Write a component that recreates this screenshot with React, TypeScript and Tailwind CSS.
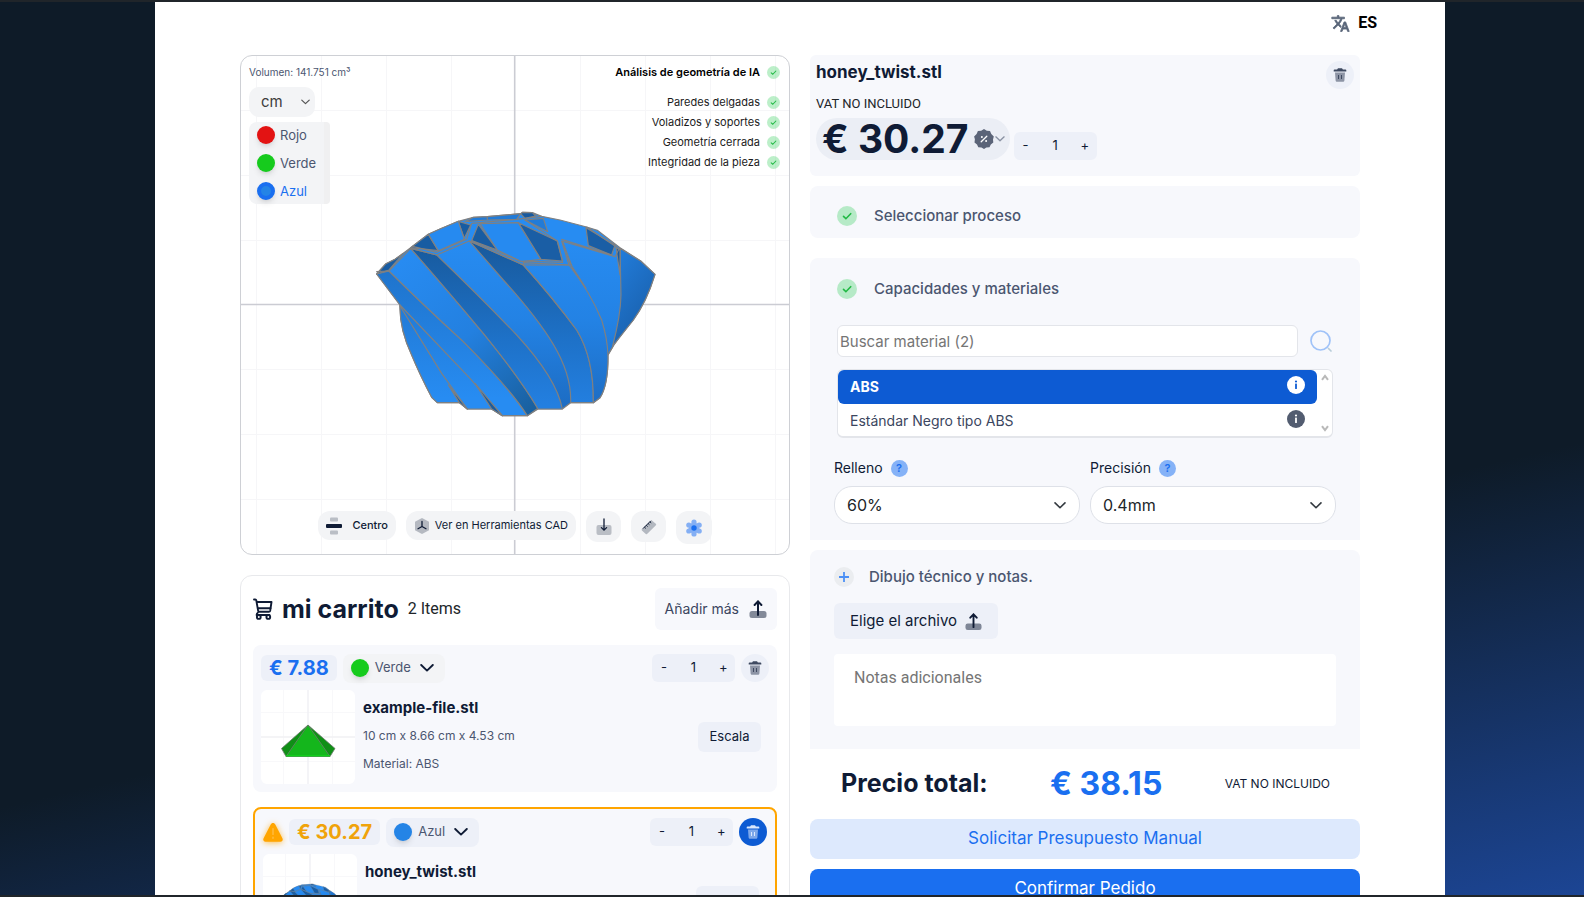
import React, { useState } from "react";

type IconProps = { className?: string };

/* ---------- icons ---------- */

function CheckBadge({ className = "" }: IconProps) {
  return (
    <svg viewBox="0 0 20 20" className={className} aria-hidden="true">
      <circle cx="10" cy="10" r="10" fill="#22c94b" opacity="0.3" />
      <path d="M6.5 10.4l2.4 2.3 4.8-5" fill="none" stroke="#22b945" strokeWidth="1.6" strokeLinecap="round" />
    </svg>
  );
}

function TrashIcon({ className = "" }: IconProps) {
  return (
    <svg viewBox="0 0 14 14" className={className} fill="currentColor" aria-hidden="true">
      <path d="M5 0.3h4l0.9 1.100h2.600c0.500 0 0.800 0.400 0.800 0.900v1.300H0.700V2.300c0-0.500 0.300-0.900 0.800-0.900h2.600z" />
      <path
        opacity="0.55"
        d="M2 4.400h10l-0.600 8c-0.100 0.800-0.700 1.400-1.500 1.400H4.100c-0.800 0-1.400-0.600-1.500-1.400z"
      />
      <path d="M5 7h1v4H5zM8 7h1v4H8z" />
    </svg>
  );
}

function UploadIcon({ className = "" }: IconProps) {
  return (
    <svg viewBox="0 0 18 18" className={className} aria-hidden="true">
      <rect x="0.5" y="11" width="17" height="7" rx="2.500" fill="#0f1b35" opacity="0.5" />
      <path d="M9 15V2.200M5.600 5L9 1.400 12.400 5" fill="none" stroke="#0f1b35" strokeWidth="2" strokeLinecap="round" />
    </svg>
  );
}

function ImportIcon() {
  return (
    <svg viewBox="0 0 16 18" className="h-[18px] w-4" aria-hidden="true">
      <rect x="0.5" y="7" width="15" height="10" rx="2" fill="#0f1b35" opacity="0.25" />
      <path d="M8 1v11M5.400 9.600L8 12.200l2.600-2.600" fill="none" stroke="#0f1b35" strokeWidth="1.300" strokeLinecap="round" />
    </svg>
  );
}

function RulerIcon() {
  return (
    <svg viewBox="0 0 16 16" className="size-4" aria-hidden="true">
      <path d="M10.600 1.200l4.200 3.600c.5.400.5 1 .1 1.500L6.300 14.800c-.4.500-1 .500-1.500.1L.9 11.400c-.4-.4-.4-1 0-1.500z" fill="#0f1b35" opacity="0.28" />
      <path d="M2 9.600L9.800 1.800M3.500 8.200l1.300 1.200M5.300 6.300l1.300 1.200M7.100 4.500l1.300 1.200M8.900 2.700l1.300 1.200" stroke="#0f1b35" strokeWidth="1" fill="none" />
    </svg>
  );
}

function FlowerIcon() {
  return (
    <svg viewBox="0 0 18 18" className="size-[18px]" aria-hidden="true">
      <g fill="#84aff4">
        <circle cx="9" cy="9" r="5.500" />
        <circle cx="9" cy="3" r="2.600" />
        <circle cx="9" cy="15" r="2.600" />
        <circle cx="3.800" cy="6" r="2.600" />
        <circle cx="14.200" cy="6" r="2.600" />
        <circle cx="3.800" cy="12" r="2.600" />
        <circle cx="14.200" cy="12" r="2.600" />
      </g>
      <circle cx="9" cy="9" r="2.700" fill="#1a6ff0" />
    </svg>
  );
}

function AlignIcon() {
  return (
    <svg viewBox="0 0 16 18" className="h-[18px] w-4" aria-hidden="true">
      <rect x="4" y="0.500" width="8" height="4" rx="1" fill="#0f1b35" opacity="0.25" />
      <rect x="4" y="13.500" width="8" height="4" rx="1" fill="#0f1b35" opacity="0.25" />
      <rect x="0" y="7" width="16" height="4" rx="1" fill="#0f1b35" />
    </svg>
  );
}

function CubeIcon() {
  return (
    <svg viewBox="0 0 16 16" className="size-4" aria-hidden="true">
      <path d="M8 0l7 3.800v8.400L8 16l-7-3.800V3.800z" fill="#0f1b35" opacity="0.27" />
      <path d="M8 3.500V8.500M8 8.500l-4 2.300M8 8.500l4 2.300" stroke="#0f1b35" strokeWidth="1.300" strokeLinecap="round" />
    </svg>
  );
}

function Chevron({ className = "" }: IconProps) {
  return (
    <svg viewBox="0 0 14 8" className={className} aria-hidden="true">
      <path d="M1.200 1L7 6.600 12.800 1" fill="none" stroke="currentColor" strokeWidth="1.900" strokeLinecap="round" strokeLinejoin="round" />
    </svg>
  );
}

function ScrollArrow({ className = "" }: IconProps) {
  return (
    <svg viewBox="0 0 8 7" className={className} aria-hidden="true">
      <path d="M1 1.200L4 5.200 7 1.200" fill="none" stroke="currentColor" strokeWidth="2" />
    </svg>
  );
}

function CartIcon() {
  return (
    <svg viewBox="0 0 20 22" className="h-[22px] w-5" fill="none" stroke="#0f1b35" strokeWidth="1.900" strokeLinecap="round" strokeLinejoin="round" aria-hidden="true">
      <path d="M1 1.500h1.200c.6 0 1 .3 1.100.9l1.800 10.200c.1.700.5 1.100 1.200 1.100h9.500c.8 0 1.200-.3 1.400-1L18.500 4H4" />
      <path d="M5 10.300h12.500M5 14.500c-1 .6-1.400 1.300-1.400 2.500h12.900" />
      <circle cx="5.800" cy="19" r="1.900" />
      <circle cx="15.300" cy="19" r="1.900" />
    </svg>
  );
}

function TranslateIcon() {
  return (
    <svg viewBox="0 0 24 24" className="size-[19px]" fill="#596579" aria-hidden="true">
      <path d="M12.870 15.070l-2.540-2.510.03-.03c1.740-1.940 2.980-4.170 3.710-6.530H17V4h-7V2H8v2H1v1.990h11.170C11.500 7.920 10.440 9.750 9 11.350 8.070 10.320 7.300 9.190 6.690 8h-2c.73 1.630 1.730 3.170 2.980 4.560l-5.090 5.020L4 19l5-5 3.110 3.110.76-2.040zM18.500 10h-2L12 22h2l1.120-3h4.750L21 22h2l-4.500-12zm-2.620 7l1.620-4.330L19.120 17h-3.240z" stroke="#596579" strokeWidth="1" />
    </svg>
  );
}

function DiscountIcon() {
  return (
    <svg viewBox="0 0 20 20" className="size-5" aria-hidden="true">
      <path
        d="M10 0l2.800 1.700 3.200.2 1.300 3L19.800 7.500 19 10.500l.3 3-2.500 1.900-1.300 2.900-3.200.1L10 20l-2.500-1.600-3.200-.1L3 15.400.5 13.500.9 10.300.1 7.500 2.600 5l1.300-3 3.300-.3z"
        fill="#5b6478"
      />
      <path d="M7.200 12.800l5.600-5.600" stroke="#fff" strokeWidth="1.300" strokeLinecap="round" />
      <circle cx="7.900" cy="7.900" r="1" fill="#fff" />
      <circle cx="12.100" cy="12.100" r="1" fill="#fff" />
    </svg>
  );
}

function InfoIcon({ disc, mark }: { disc: string; mark: string }) {
  return (
    <svg viewBox="0 0 18 18" className="size-[18px]" aria-hidden="true">
      <circle cx="9" cy="9" r="9" fill={disc} />
      <circle cx="9" cy="5.500" r="1.100" fill={mark} />
      <rect x="8.100" y="7.500" width="1.800" height="5.500" rx="0.500" fill={mark} />
    </svg>
  );
}

function WarningIcon() {
  return (
    <svg viewBox="0 0 20 19" className="h-[19px] w-5 drop-shadow-[0_1px_3px_rgba(255,165,0,0.7)]" aria-hidden="true">
      <path d="M10 0c1 0 1.700.5 2.300 1.500l7.100 13.700c.9 1.700 0 3.500-1.900 3.500h-15c-1.900 0-2.800-1.800-1.900-3.500L7.700 1.500C8.300.5 9 0 10 0z" fill="#ffa500" />
      <path d="M10 5.500v6M10 14v1.300" stroke="#ffc04d" strokeWidth="1.200" strokeLinecap="round" />
    </svg>
  );
}

/* ---------- 3D previews ---------- */

function TwistModel() {
  return (
    <g stroke="#808080" strokeWidth="3.500" strokeLinejoin="round" strokeLinecap="round">
      <defs>
        <linearGradient id="tw-light" x1="0" y1="100" x2="0" y2="600" gradientUnits="userSpaceOnUse">
          <stop offset="0" stopColor="#278cf2" />
          <stop offset="0.500" stopColor="#2382e4" />
          <stop offset="1" stopColor="#1d6dc4" />
        </linearGradient>
        <linearGradient id="tw-dark" x1="0" y1="130" x2="0" y2="600" gradientUnits="userSpaceOnUse">
          <stop offset="0" stopColor="#185b9f" />
          <stop offset="0.600" stopColor="#1e72c9" />
          <stop offset="1" stopColor="#237fe0" />
        </linearGradient>
        <linearGradient id="tw-rise" x1="0" y1="200" x2="0" y2="580" gradientUnits="userSpaceOnUse">
          <stop offset="0" stopColor="#1f74cc" />
          <stop offset="1" stopColor="#278cf2" />
        </linearGradient>
        <linearGradient id="tw-valley" x1="120" y1="150" x2="480" y2="620" gradientUnits="userSpaceOnUse">
          <stop offset="0" stopColor="#278bf1" />
          <stop offset="0.500" stopColor="#2380e0" />
          <stop offset="1" stopColor="#19609f" />
        </linearGradient>
        <linearGradient id="tw-side" x1="700" y1="200" x2="830" y2="300" gradientUnits="userSpaceOnUse">
          <stop offset="0" stopColor="#227cda" />
          <stop offset="1" stopColor="#1b66b6" />
        </linearGradient>
      </defs>
      <path
        fill="url(#tw-light)"
        d="M20 207L48 176 75 163 100 145 122 128 175 88 210 72 265 49 310 37 352 35 452 26 458 22 487 23 515 34 570 45 650 66 682 76 750 128 812 168 855 208Q830 290 790 345 750 395 732 420L714 450Q715 540 690 578L670 593H602L577 612H504L472 632H397L365 612H292L268 593H202L185 577Q150 510 125 450 88 370 90 300z"
      />
      <path fill="url(#tw-rise)" d="M20 207L57 198Q160 300 280 410 420 550 472 632H397L365 612H292L268 593H202L185 577Q150 510 125 450 88 370 90 300z" />
      <path fill="url(#tw-valley)" d="M57 198L122 130Q240 265 340 385 450 520 504 610L472 632Q420 550 280 410 160 300 57 198z" />
      <path fill="url(#tw-dark)" d="M122 130L200 150Q330 275 440 390 560 520 577 612H504Q450 520 340 385 240 265 122 130z" />
      <path fill="url(#tw-dark)" d="M298 108L460 180Q550 280 620 375 672 460 670 593H602Q605 510 550 418 500 335 400 225z" />
      <path fill="url(#tw-light)" d="M460 173L597 180Q660 260 695 345 712 400 714 450 715 540 690 578L670 593Q672 460 620 375 550 280 460 180z" />
      <path fill="url(#tw-side)" d="M750 130L812 168 855 208Q830 290 790 345 750 395 728 423 752 330 753 270z" />
      <path fill="none" d="M90 303Q150 400 215 505L292 612M90 300Q190 405 300 520L397 632M728 425L714 450" />
      <path fill="#1b5c9d" d="M235 540L268 593 292 612zM315 535L365 612 397 632z" />
      <path fill="#185ca2" d="M20 207L48 176 75 163 100 145 57 195zM122 128L175 88 205 137zM265 49L302 60 283 100zM325 58L382 135 305 107z" />
      <path fill="#268af0" d="M330 56L445 53 513 163 455 170 382 135zM175 88L210 72 265 49 283 103 205 137z" />
      <path fill="#1a5ea5" d="M445 53L562 108 578 168 513 163zM578 110L600 175 648 250 610 195zM648 68L735 120 725 150 655 122z" />
      <path fill="#227bd7" d="M465 45L520 40 533 80zM310 37L352 35 352 45 285 50zM352 35L452 26 440 43 352 45z" />
      <path fill="#185a9f" d="M452 26L458 22 487 23 497 33 465 40zM738 128L750 135 750 210z" />
      <path fill="none" d="M57 198L20 200M122 130L200 150 298 108 460 180 597 180 575 108 735 155 748 130M128 124L200 142 290 103 305 55 440 43 515 34M305 107L450 168 578 172 562 108 465 45M575 103L725 150M650 66L748 132" />
    </g>
  );
}

function SceneGrid() {
  const vertical = [15, 80, 145, 210, 339, 404, 469, 534];
  const horizontal = [54, 119, 184, 313, 378, 443];
  return (
    <g>
      {vertical.map((x) => (
        <path key={`v${x}`} d={`M${x}.5 0V498`} stroke="#f6f6f8" />
      ))}
      {horizontal.map((y) => (
        <path key={`h${y}`} d={`M0 ${y}.5H548`} stroke="#f6f6f8" />
      ))}
      <path d="M273.700 0V498M0 248.500H548" stroke="#cbccd3" strokeWidth="1.600" fill="none" />
    </g>
  );
}

function Thumbnail({ kind }: { kind: "pyramid" | "twist" }) {
  return (
    <svg viewBox="0 0 94 94" className="size-[94px] shrink-0 rounded-md bg-white" role="img" aria-label={kind}>
      <path d="M22.500 0V94M71.500 0V94M0 22.500H94M0 71.500H94" stroke="#f8f8fa" />
      <path d="M47 0V94M0 47H94" stroke="#f1f1f4" strokeWidth="1.500" />
      {kind === "pyramid" ? (
        <g stroke="#6d7a6d" strokeWidth="0.800" strokeLinejoin="round">
          <path d="M47 35L74 58.500 69 66.500H25L20.500 58.500z" fill="#0f8f16" />
          <path d="M47 35L69 66.500H25z" fill="#14b61c" />
          <path d="M25 65h44v1.500H25z" fill="#0fd01a" stroke="none" />
        </g>
      ) : (
        <g transform="translate(19 28.500) scale(0.064)">
          <TwistModel />
        </g>
      )}
    </svg>
  );
}

/* ---------- shared controls ---------- */

function Quantity({ label }: { label: string }) {
  const [value, setValue] = useState(1);
  return (
    <div className="flex h-7 w-[83px] items-center justify-between rounded-md bg-[#edf0f8] px-2 text-[13px] text-[#0f1b35]">
      <button type="button" aria-label={`Reducir ${label}`} className="w-2 text-center" onClick={() => setValue(Math.max(1, value - 1))}>
        -
      </button>
      <output aria-label={label}>{value}</output>
      <button type="button" aria-label={`Aumentar ${label}`} className="w-2 text-center" onClick={() => setValue(value + 1)}>
        +
      </button>
    </div>
  );
}

function RemoveButton({ active = false }: { active?: boolean }) {
  return (
    <button
      type="button"
      aria-label="Eliminar"
      className={
        active
          ? "grid size-7 place-items-center rounded-full bg-[#0d5bd3] text-[#dbe8fd]"
          : "grid size-7 place-items-center rounded-full bg-[#edf0f8] text-[#3e4960]"
      }
    >
      <TrashIcon className="size-[14px]" />
    </button>
  );
}

function RoundSelect({ id, label, options }: { id: string; label: string; options: string[] }) {
  return (
    <div className="flex flex-1 flex-col gap-2">
      <div className="flex h-5 items-center gap-2">
        <label htmlFor={id} className="text-sm text-[#0f1b35]">
          {label}
        </label>
        <button
          type="button"
          aria-label={`Ayuda: ${label}`}
          className="grid size-[17px] place-items-center rounded-full bg-[#85b2f7] text-[11px] leading-none font-semibold text-[#1a6ff0]"
        >
          ?
        </button>
      </div>
      <div className="relative">
        <select id={id} className="h-[38px] w-full appearance-none rounded-[18px] border border-[#dee1e8] bg-white px-3 text-base text-[#212529]">
          {options.map((o) => (
            <option key={o}>{o}</option>
          ))}
        </select>
        <Chevron className="pointer-events-none absolute top-4 right-[14px] h-[7px] w-3 text-[#343a40]" />
      </div>
    </div>
  );
}

/* ---------- left column ---------- */

const colours = [
  { name: "Rojo", swatch: "bg-[#e31313]", text: "text-[#4b5670]" },
  { name: "Verde", swatch: "bg-[#16cb1d]", text: "text-[#4b5670]" },
  { name: "Azul", swatch: "bg-[#2484e6] border-[4px] border-[#1a6ff0]", text: "text-[#1a6ff0]" },
];

const checks = ["Paredes delgadas", "Voladizos y soportes", "Geometría cerrada", "Integridad de la pieza"];

function Viewer() {
  return (
    <section className="relative h-[500px] overflow-hidden rounded-xl border border-[#ced0d5] bg-white">
      <svg viewBox="0 0 548 498" preserveAspectRatio="xMidYMid slice" className="absolute inset-0 size-full" role="img" aria-label="honey_twist.stl">
        <SceneGrid />
        <g transform="translate(129 149) scale(0.33333)">
          <TwistModel />
        </g>
      </svg>

      <div className="relative flex h-full flex-col justify-between p-2">
        <div className="flex items-start justify-between">
          <div className="flex flex-col items-start">
            <p className="h-[23px] text-[10px] leading-[17px] text-[#4b5670]">Volumen: 141.751 cm³</p>
            <div className="relative">
              <select aria-label="Unidad" className="h-[30px] w-[66px] appearance-none rounded-[10px] bg-[#f3f4f6] pl-3 text-[15px] text-[#3d3d3d]">
                <option>cm</option>
                <option>mm</option>
                <option>in</option>
              </select>
              <Chevron className="pointer-events-none absolute top-3 right-[5px] h-[6px] w-[9px] text-[#555]" />
            </div>
            <div className="mt-[5px] flex h-[82px] w-[81px] flex-col justify-between rounded-l-lg rounded-r border-r-[6px] border-[#f0f0f1] bg-[#f3f4f6] py-1 pl-2">
              {colours.map((c) => (
                <button key={c.name} type="button" className={`flex items-center gap-[5px] text-[13px] leading-[18px] ${c.text}`}>
                  <span className={`size-[18px] rounded-full shadow-md ${c.swatch}`} />
                  {c.name}
                </button>
              ))}
            </div>
          </div>

          <div className="flex flex-col items-end pr-px text-[11px] text-[#1b1b1b]">
            <div className="mb-3 flex h-4 items-center gap-[7px] font-semibold text-black">
              Análisis de geometría de IA
              <CheckBadge className="size-[13px]" />
            </div>
            {checks.map((c) => (
              <div key={c} className="flex h-5 items-center gap-[7px]">
                {c}
                <CheckBadge className="size-[13px]" />
              </div>
            ))}
          </div>
        </div>

        <div className="flex h-[35px] items-start justify-center gap-[10px] text-[11px] font-medium text-[#0f1b35]">
          <button type="button" className="flex h-[29px] w-[78px] items-center justify-between rounded-xl bg-[#f3f4f6] px-2">
            <AlignIcon />
            Centro
          </button>
          <button type="button" className="flex h-[29px] w-[170px] items-center justify-between rounded-xl bg-[#f3f4f6] px-2 font-normal">
            <CubeIcon />
            Ver en Herramientas CAD
          </button>
          <button type="button" aria-label="Importar" className="grid h-[31px] w-[35px] place-items-center rounded-xl bg-[#f3f4f6]">
            <ImportIcon />
          </button>
          <button type="button" aria-label="Medir" className="grid h-[31px] w-[35px] place-items-center rounded-xl bg-[#f3f4f6]">
            <RulerIcon />
          </button>
          <button type="button" aria-label="Ajustes" className="grid h-[33px] w-9 place-items-center rounded-xl bg-[#f3f4f6]">
            <FlowerIcon />
          </button>
        </div>
      </div>
    </section>
  );
}

type Item = {
  file: string;
  price: string;
  colour: string;
  swatch: string;
  details: string[];
  kind: "pyramid" | "twist";
  selected: boolean;
};

const items: Item[] = [
  {
    file: "example-file.stl",
    price: "€ 7.88",
    colour: "Verde",
    swatch: "bg-[#16cb1d]",
    details: ["10 cm x 8.66 cm x 4.53 cm", "Material: ABS"],
    kind: "pyramid",
    selected: false,
  },
  { file: "honey_twist.stl", price: "€ 30.27", colour: "Azul", swatch: "bg-[#2484e6]", details: [], kind: "twist", selected: true },
];

function CartItem({ item }: { item: Item }) {
  const chip = item.selected ? "bg-[#edf0f8]" : "bg-[#f3f4f6]";
  return (
    <li className={item.selected ? "rounded-lg border-2 border-[#ffa500] bg-[#f7f8fc] p-2" : "rounded-lg bg-[#f7f8fc] p-2"}>
      <div className="flex h-[30px] items-center justify-between">
        <div className="flex items-center gap-[6px]">
          {item.selected && <WarningIcon />}
          <span className={`flex h-[26px] items-center rounded-md bg-[#edf0f8] px-2 text-xl font-bold ${item.selected ? "text-[#f0a30a]" : "text-[#1a6ff0]"}`}>
            {item.price}
          </span>
          <button type="button" className={`flex h-[29px] items-center gap-[6px] rounded-lg px-2 text-[13px] text-[#4b5670] ${chip}`}>
            <span className={`size-[18px] rounded-full shadow-md ${item.swatch}`} />
            {item.colour}
            <Chevron className="mx-[3px] h-2 w-[14px] text-[#0f1b35]" />
          </button>
        </div>
        <div className="flex items-center gap-[6px]">
          <Quantity label={`Cantidad ${item.file}`} />
          <RemoveButton active={item.selected} />
        </div>
      </div>
      <div className="mt-[7px] flex items-center gap-2">
        <Thumbnail kind={item.kind} />
        <div className="flex flex-1 flex-col gap-2 self-start pt-2">
          <h3 className="text-[15px] leading-5 font-bold text-[#0f1b35]">{item.file}</h3>
          {item.details.map((d) => (
            <p key={d} className="text-xs leading-5 text-[#4b5670]">
              {d}
            </p>
          ))}
        </div>
        <button type="button" aria-label="Escala" className="mr-2 h-[30px] w-[63px] rounded-md bg-[#edf0f8] text-[13px] text-[#0f1b35]">
          {!item.selected && "Escala"}
        </button>
      </div>
    </li>
  );
}

function Cart() {
  return (
    <section className="rounded-xl border border-[#e8e9ec] bg-white p-3">
      <header className="flex items-center justify-between">
        <div className="flex items-center gap-[9px]">
          <CartIcon />
          <h2 className="text-[25px] leading-8 font-bold text-[#0f1b35]">mi carrito</h2>
          <span className="font-[Roboto,sans-serif] text-base text-[#212529]">2 Items</span>
        </div>
        <button type="button" className="flex h-[42px] items-center gap-[10px] rounded-md bg-[#f7f8fc] px-[10px] text-sm text-[#3b4660]">
          Añadir más
          <UploadIcon className="size-[18px]" />
        </button>
      </header>
      <ul className="mt-[15px] flex flex-col gap-[15px]">
        {items.map((i) => (
          <CartItem key={i.file} item={i} />
        ))}
      </ul>
    </section>
  );
}

/* ---------- right column ---------- */

const materials = [
  { name: "ABS", on: true },
  { name: "Estándar Negro tipo ABS", on: false },
];

function Summary() {
  return (
    <section className="flex h-[121px] items-start justify-between rounded-md bg-[#f7f8fc] px-[6px] pt-[5px]">
      <div>
        <h1 className="text-[17px] leading-6 font-bold text-[#0f1b35]">honey_twist.stl</h1>
        <p className="mt-[10px] font-[Roboto,sans-serif] text-[13px] leading-5 text-[#212529]">VAT NO INCLUIDO</p>
        <div className="mt-1 flex items-end gap-1">
          <button type="button" className="flex h-[42px] items-center rounded-[21px] bg-[#ebeef5] pr-[5px] pl-[6px]">
            <span className="mr-[5px] text-[39px] leading-10 font-bold text-[#0f1b35]">€ 30.27</span>
            <DiscountIcon />
            <Chevron className="ml-px h-[6px] w-[10px] text-[#8a92a3]" />
          </button>
          <Quantity label="Cantidad" />
        </div>
      </div>
      <div className="pt-px">
        <RemoveButton />
      </div>
    </section>
  );
}

function Materials() {
  return (
    <section className="mt-5 h-[282px] rounded-t-lg bg-[#f7f8fc] px-6 pt-5">
      <h2 className="flex h-[22px] items-center gap-[17px] pl-[3px] text-[15px] font-medium text-[#4b5670]">
        <CheckBadge className="size-5" />
        Capacidades y materiales
      </h2>
      <div className="mt-[25px] flex items-center gap-3 pr-1 pl-[3px]">
        <input
          type="search"
          aria-label="Buscar material"
          placeholder="Buscar material (2)"
          className="h-8 min-w-0 flex-1 rounded-md border border-[#e3e5ea] bg-white px-[2px] text-[15px] text-[#212529] placeholder:text-[#757575]"
        />
        <button type="button" aria-label="Buscar">
          <svg viewBox="0 0 22 22" className="size-[22px]" fill="none">
            <circle cx="10.500" cy="10.500" r="9.500" stroke="#9fc2f8" strokeWidth="1.700" />
            <path d="M18.500 18.500l2.500 2.500" stroke="#b8cdd9" strokeWidth="1.700" strokeLinecap="round" />
          </svg>
        </button>
      </div>
      <div className="mx-[3px] mt-3 flex h-[69px] rounded-md border border-b-2 border-[#e3e5ea] bg-white">
        <ul className="flex-1">
          {materials.map((m) => (
            <li
              key={m.name}
              className={
                m.on
                  ? "flex h-[34px] justify-between rounded-md bg-[#0d5bd3] px-3 text-sm font-bold text-white"
                  : "flex h-[34px] justify-between px-3 text-sm text-[#3b4660]"
              }
            >
              <button type="button">{m.name}</button>
              <button type="button" aria-label={`Información ${m.name}`} className="self-start pt-[6px]">
                {m.on ? <InfoIcon disc="#ffffff" mark="#0d5bd3" /> : <InfoIcon disc="#525c70" mark="#ffffff" />}
              </button>
            </li>
          ))}
        </ul>
        <div className="flex w-[15px] flex-col items-center justify-between py-1 text-[#b9b9b9]">
          <ScrollArrow className="h-[7px] w-2 rotate-180" />
          <ScrollArrow className="h-[7px] w-2" />
        </div>
      </div>
      <div className="mt-5 flex gap-[10px]">
        <RoundSelect id="relleno" label="Relleno" options={["60%", "20%", "100%"]} />
        <RoundSelect id="precision" label="Precisión" options={["0.4mm", "0.2mm"]} />
      </div>
    </section>
  );
}

function Notes() {
  return (
    <section className="mt-[10px] h-[199px] rounded-t-lg bg-[#f7f8fc] px-6 pt-4">
      <h2 className="flex h-[22px] items-center gap-[15px] text-[15px] font-medium text-[#4b5670]">
        <span className="grid size-5 place-items-center rounded-full bg-[#ebedf0]">
          <svg viewBox="0 0 10 10" className="size-[10px]" aria-hidden="true">
            <path d="M5 0v10M0 5h10" stroke="#4d90f5" strokeWidth="1.800" />
          </svg>
        </span>
        Dibujo técnico y notas.
      </h2>
      <button type="button" className="mt-[15px] flex h-9 items-center gap-2 rounded-md bg-[#edf0f8] px-4 text-[15px] text-[#0f1b35]">
        Elige el archivo
        <UploadIcon className="size-[17px]" />
      </button>
      <textarea
        aria-label="Notas adicionales"
        placeholder="Notas adicionales"
        className="mt-[15px] block h-[72px] w-full resize-none rounded bg-white px-5 py-3 font-[Roboto,sans-serif] text-base placeholder:text-[#757575]"
      />
    </section>
  );
}

export default function App() {
  return (
    <div className="h-screen overflow-hidden border-y-2 border-[#20252a] bg-[linear-gradient(167deg,#0e1b28_64%,#1c4594_100%)] pl-4 font-[Inter,sans-serif]">
      <main className="mx-auto min-h-full w-full max-w-[1290px] bg-white px-[85px]">
        <header className="flex h-[53px] justify-end pt-[10px]">
          <button type="button" className="-mr-[17px] flex h-[22px] items-center gap-2 font-[Roboto,sans-serif] text-base font-bold text-black">
            <TranslateIcon />
            ES
          </button>
        </header>

        <div className="grid grid-cols-2 items-start gap-5">
          <div className="flex flex-col gap-5">
            <Viewer />
            <Cart />
          </div>

          <div>
            <Summary />
            <section className="mt-[10px] flex h-[52px] items-center rounded-lg bg-[#f7f8fc] px-[27px] pt-2">
              <h2 className="flex h-[22px] items-center gap-[17px] text-[15px] font-medium text-[#4b5670]">
                <CheckBadge className="size-5" />
                Seleccionar proceso
              </h2>
            </section>
            <Materials />
            <Notes />
            <div className="flex h-[70px] items-center justify-between pr-[30px] pl-[31px]">
              <span className="text-[25px] font-bold text-[#0f1b35]">Precio total:</span>
              <span className="text-[32px] font-bold text-[#1a6ff0]">€ 38.15</span>
              <span className="text-xs text-[#0f1b35]">VAT NO INCLUIDO</span>
            </div>
            <button type="button" className="h-10 w-full rounded-lg bg-[#dde9fd] text-[17px] text-[#1a6ff0]">
              Solicitar Presupuesto Manual
            </button>
            <button type="button" className="mt-[10px] h-10 w-full rounded-lg bg-[#1a6ff0] text-[17px] text-white">
              Confirmar Pedido
            </button>
          </div>
        </div>
      </main>
    </div>
  );
}
